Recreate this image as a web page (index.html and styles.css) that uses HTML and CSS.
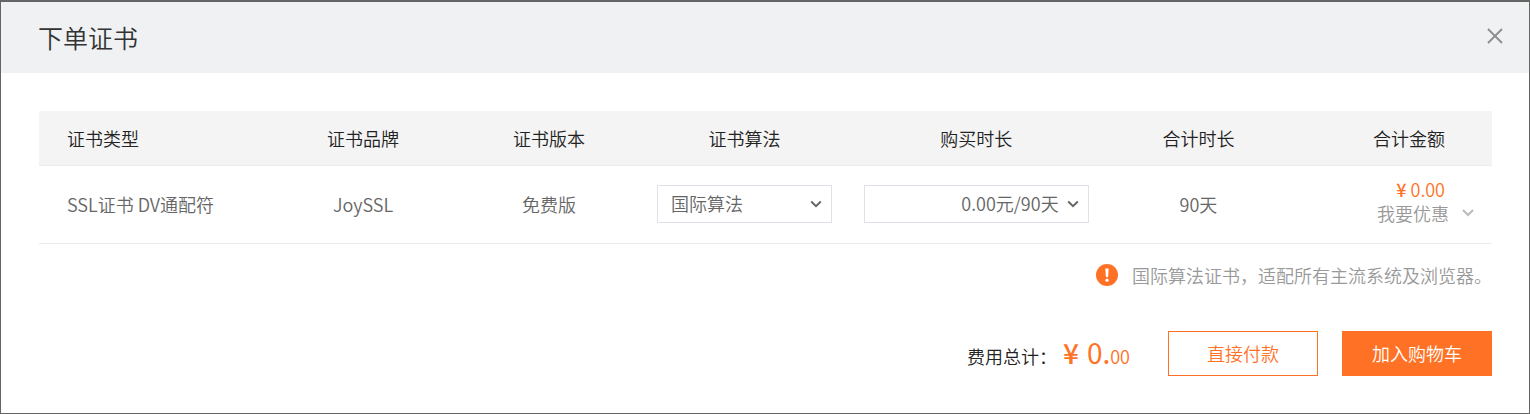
FILE: index.html
```html
<!DOCTYPE html>
<html lang="zh-CN">
<head>
    <meta charset="UTF-8">
    <meta name="viewport" content="width=device-width, initial-scale=1.0">
    <title>下单证书</title>
    <link rel="stylesheet" href="styles.css">
</head>
<body>
    <div class="modal" role="dialog" aria-labelledby="modal-title">
        <header class="modal-header">
            <h1 id="modal-title">下单证书</h1>
            <button type="button" class="close-btn" aria-label="关闭">
                <svg width="16" height="16" viewBox="0 0 16 16"><path d="M1 1L15 15M15 1L1 15" fill="none" stroke="#8e8e8e" stroke-width="1.9"/></svg>
            </button>
        </header>

        <div class="modal-body">
            <table class="order-table">
                <thead>
                    <tr>
                        <th class="col-type">证书类型</th>
                        <th class="col-brand">证书品牌</th>
                        <th class="col-version">证书版本</th>
                        <th class="col-algorithm">证书算法</th>
                        <th class="col-period">购买时长</th>
                        <th class="col-total">合计时长</th>
                        <th class="col-amount">合计金额</th>
                    </tr>
                </thead>
                <tbody>
                    <tr>
                        <td class="col-type">SSL证书 DV通配符</td>
                        <td>JoySSL</td>
                        <td>免费版</td>
                        <td>
                            <div class="select-box algorithm">
                                <select aria-label="证书算法">
                                    <option>国际算法</option>
                                </select>
                                <svg class="arrow" width="12" height="8" viewBox="0 0 12 8"><path d="M1.2 1.5L6 6.2L10.8 1.5" fill="none" stroke="#666" stroke-width="2"/></svg>
                            </div>
                        </td>
                        <td>
                            <div class="select-box period">
                                <select aria-label="购买时长">
                                    <option>0.00元/90天</option>
                                </select>
                                <svg class="arrow" width="12" height="8" viewBox="0 0 12 8"><path d="M1.2 1.5L6 6.2L10.8 1.5" fill="none" stroke="#666" stroke-width="2"/></svg>
                            </div>
                        </td>
                        <td>90天</td>
                        <td class="col-amount">
                            <div class="price"><span class="yen">¥</span>0.00</div>
                            <button type="button" class="discount-btn">
                                我要优惠
                                <svg width="12" height="8" viewBox="0 0 12 8"><path d="M1 1L6 6L11 1" fill="none" stroke="#bbb" stroke-width="2"/></svg>
                            </button>
                        </td>
                    </tr>
                </tbody>
            </table>

            <p class="notice">
                <svg width="22" height="22" viewBox="0 0 22 22"><circle cx="11" cy="11" r="11" fill="#ff7225"/><path d="M9.3 4.5h3.4l-.6 8.5H9.9z" fill="#fff"/><circle cx="11" cy="16.2" r="1.6" fill="#fff"/></svg>
                国际算法证书，适配所有主流系统及浏览器。
            </p>

            <div class="footer">
                <div class="summary">
                    <span>费用总计：</span>
                    <span class="total"><span class="yen">¥</span>0.<small>00</small></span>
                </div>
                <button type="button" class="btn">直接付款</button>
                <button type="button" class="btn btn-primary">加入购物车</button>
            </div>
        </div>
    </div>
</body>
</html>
```
FILE: styles.css
```css
* {
    margin: 0;
    padding: 0;
    box-sizing: border-box;
}

body {
    min-height: 100vh;
    display: flex;
    padding: 2px 1px 1px;
    background: #656565;
    color: #222;
    font-family: "Noto Sans CJK SC", sans-serif;
    font-size: 18px;
    font-weight: 350;
    line-height: 24px;
}

button,
select {
    font: inherit;
    color: inherit;
    background: transparent;
    border: none;
    cursor: pointer;
}

svg {
    display: block;
}

.modal {
    flex: 1;
    background: #fff;
}

.modal-header {
    display: flex;
    justify-content: space-between;
    align-items: center;
    height: 71px;
    padding: 0 26px 2px 37px;
    background: #f0f1f3;
}

.modal-header h1 {
    color: #333;
    font-size: 25px;
    font-weight: 350;
}

.close-btn {
    padding-bottom: 2px;
}

.modal-body {
    padding: 38px 37px 36px 38px;
}

.order-table {
    width: 100%;
    table-layout: fixed;
    border-collapse: separate;
    border-spacing: 0;
    text-align: center;
    color: #666;
}

.order-table th {
    height: 55px;
    background: #f4f4f4;
    border-bottom: 1px solid #ebebeb;
    color: #222;
    font-weight: 350;
}

.order-table td {
    height: 78px;
    padding-bottom: 2px;
    border-bottom: 1px solid #ebebeb;
}

.order-table .col-type {
    width: 15.4%;
    padding-left: 28px;
    text-align: left;
    white-space: nowrap;
}

.col-brand {
    width: 13.8%;
}

.col-version {
    width: 11.8%;
}

.col-algorithm {
    width: 15.1%;
}

.col-period {
    width: 16.8%;
}

.col-total {
    width: 13.8%;
}

.order-table .col-amount {
    width: 13.3%;
    text-align: right;
}

.order-table th.col-amount {
    padding-right: 47px;
}

.order-table td.col-amount {
    padding-bottom: 8px;
}

.select-box {
    position: relative;
    margin: 0 auto;
}

.select-box select {
    width: 100%;
    height: 38px;
    padding: 0 29px 1px 13px;
    border: 1px solid #dfe2e8;
    border-radius: 0;
    appearance: none;
}

.select-box .arrow {
    position: absolute;
    top: 15px;
    right: 10px;
    pointer-events: none;
}

.algorithm {
    width: 175px;
}

.period {
    width: 225px;
}

.period select {
    text-align-last: right;
}

.price {
    padding-right: 47px;
    color: #ff7225;
}

.yen {
    margin-right: 4px;
    font-weight: 500;
}

.discount-btn {
    display: flex;
    align-items: center;
    gap: 13px;
    margin-left: auto;
    padding-right: 18px;
    color: #999;
}

.notice {
    display: flex;
    justify-content: flex-end;
    align-items: center;
    gap: 14px;
    padding-top: 19px;
    color: #999;
}

.footer {
    display: flex;
    justify-content: flex-end;
    align-items: center;
    margin-top: 44px;
}

.summary {
    display: flex;
    align-items: baseline;
    gap: 6px;
    margin-right: 38px;
}

.total {
    color: #ff7225;
    font-size: 28px;
    font-weight: 400;
}

.total .yen {
    margin-right: 8px;
}

.total small {
    font-size: 18px;
    font-weight: 350;
}

.btn {
    width: 150px;
    height: 45px;
    padding-bottom: 2px;
    border: 1px solid #ff7225;
    color: #ff7225;
}

.btn-primary {
    margin-left: 24px;
    background: #ff7225;
    color: #fff;
}
```
